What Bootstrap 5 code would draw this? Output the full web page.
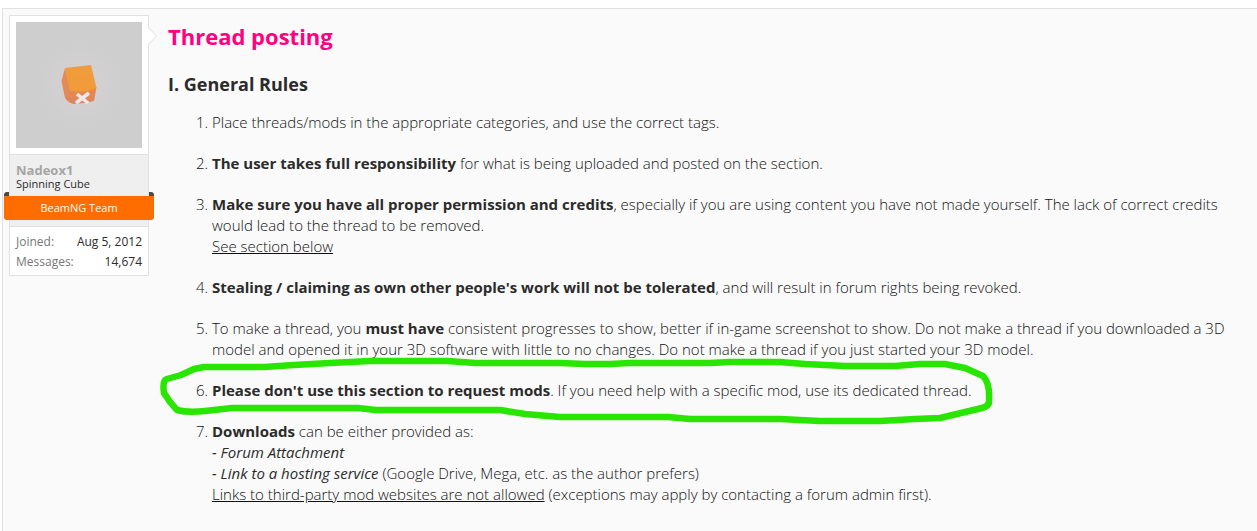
<!DOCTYPE html>
<html lang="en">
<head>
<meta charset="utf-8">
<meta name="viewport" content="width=device-width, initial-scale=1">
<title>Thread posting</title>
<link rel="stylesheet" href="https://cdn.jsdelivr.net/npm/bootstrap@5.3.0/dist/css/bootstrap.min.css">
<style>
body { font-family: "Open Sans", sans-serif; font-size: 15px; line-height: 21px; color: #2b2b2b; background: #fff; }
a, a:hover { color: inherit; }
.post { margin: 8px 0 0 2px; padding: 6px 17px 19px 6px; min-height: calc(100vh - 8px); gap: 19px; background: #fafafa; border: 1px solid #e1e1e1; border-width: 1px 0 0 1px; }
.user-panel { width: 140px; background: #fff; border: 1px solid #e1e1e1; font-size: 12px; line-height: 14px; }
.avatar-box { padding: 6px; }
.avatar-box svg { width: 100%; }
.arrow { top: 11px; left: 100%; width: 9px; height: 18px; overflow: visible; }
.user-text { background: #efefef; border: 1px solid #e1e1e1; border-width: 1px 0; padding: 8px 6px 6px; font-size: 11px; }
.user-name { font-size: 13px; line-height: 14px; color: #a5a5a5; }
.ribbon { margin: 5px -12px 0; height: 24px; line-height: 24px; background: #ff6c00; color: #fff; border-radius: 0 0 3px 3px; }
.ribbon::before, .ribbon::after { content: ""; position: absolute; top: -4px; width: 5px; height: 4px; background: #4a4a4a; }
.ribbon::before { left: 0; border-top-left-radius: 3px; }
.ribbon::after { right: 0; border-top-right-radius: 3px; }
.stats { padding: 5px 6px 3px; line-height: 20px; }
.stats dt { color: #777; }
.title { font-size: 22px; line-height: 30px; color: #ff0080; margin: 6px 0 21px; }
.section-title { font-size: 18px; line-height: 24px; margin-bottom: 16px; }
.rules { padding-left: 44px; font-weight: 300; color: #111; }
.rules b { font-weight: 700; color: #2b2b2b; }
.rules i { font-weight: 400; color: #2b2b2b; }
.rules > li { margin-bottom: 20px; }
.marker-ring { left: -52px; top: -25px; width: 835px; height: 72px; pointer-events: none; }
</style>
</head>
<body>
<article class="post d-flex align-items-start">
  <aside class="user-panel position-relative flex-shrink-0">
    <div class="avatar-box">
      <svg class="d-block" viewBox="0 0 126 126" role="img" aria-label="Nadeox1 avatar">
        <defs>
          <radialGradient id="backdrop"><stop offset="0" stop-color="#d5d1d1"/><stop offset="1" stop-color="#cecece"/></radialGradient>
          <linearGradient id="cubeTop" x2="0" y2="1"><stop offset="0" stop-color="#ee9d3c"/><stop offset="1" stop-color="#f29a39"/></linearGradient>
          <linearGradient id="cubeFront" x2="0" y2="1"><stop offset="0" stop-color="#e88a47"/><stop offset="1" stop-color="#dc8465"/></linearGradient>
          <filter id="soft"><feGaussianBlur stdDeviation=".5"/></filter>
        </defs>
        <path fill="#cecece" d="M0 0h126v126H0z"/>
        <circle cx="64" cy="63" r="48" fill="url(#backdrop)"/>
        <g filter="url(#soft)">
          <path fill="#e18c58" d="M49 46 45.500 59 49 76Q52 81 58 82L55 69Z"/>
          <path fill="url(#cubeFront)" d="M53 68 80.500 65 78 79 68 81 58 82Q53 80 50 77Z"/>
          <path fill="url(#cubeTop)" d="M49 46 75 43 80.500 66Q69 71 54 69Z"/>
          <path fill="none" stroke="#ece9e8" stroke-width="3.500" d="m61 72 11 9M73 71 60 81"/>
        </g>
      </svg>
    </div>
    <svg class="arrow position-absolute" viewBox="0 0 9 18" aria-hidden="true"><path fill="#fff" d="M0 0 9 9 0 18H-1V0Z"/><path fill="none" stroke="#e1e1e1" d="m0 0 8.500 9L0 18"/></svg>
    <div class="user-text">
      <a href="#" class="user-name d-block fw-bold text-decoration-none">Nadeox1</a>
      <div>Spinning Cube</div>
      <div class="ribbon position-relative text-center">BeamNG Team</div>
    </div>
    <dl class="stats mb-0">
      <div class="d-flex justify-content-between"><dt class="fw-normal">Joined:</dt><dd class="mb-0">Aug 5, 2012</dd></div>
      <div class="d-flex justify-content-between"><dt class="fw-normal">Messages:</dt><dd class="mb-0">14,674</dd></div>
    </dl>
  </aside>
  <section class="flex-grow-1">
    <h1 class="title fw-bold">Thread posting</h1>
    <h2 class="section-title fw-bold">I. General Rules</h2>
    <ol class="rules mb-0">
      <li>Place threads/mods in the appropriate categories, and use the correct tags.</li>
      <li><b>The user takes full responsibility</b> for what is being uploaded and posted on the section.</li>
      <li><b>Make sure you have all proper permission and credits</b>, especially if you are using content you have not made yourself. The lack of correct credits would lead to the thread to be removed.<br><a href="#">See section below</a></li>
      <li><b>Stealing / claiming as own other people's work will not be tolerated</b>, and will result in forum rights being revoked.</li>
      <li>To make a thread, you <b>must have</b> consistent progresses to show, better if in-game screenshot to show. Do not make a thread if you downloaded a 3D model and opened it in your 3D software with little to no changes. Do not make a thread if you just started your 3D model.</li>
      <li class="position-relative"><b>Please don't use this section to request mods</b>. If you need help with a specific mod, use its dedicated thread.
        <svg class="marker-ring position-absolute" viewBox="160 355 835 72" aria-hidden="true"><path fill="none" stroke="#29e600" stroke-width="6.500" stroke-linejoin="round" stroke-linecap="round" d="M204 367H264L294 365 330 363 370 361H448L475 363H560L585 364H610L630 363H710L730 362H780L805 364 845 366H895L920 364H945L965 368 983 376Q990 383 989 400Q990 406 982 408L940 418 915 419 880 421H820L780 419H690L668 417H560L525 414 500 410H376L358 408H232L205 411Q188 413 177 410Q170 403 164 393Q162 380 167 379L181 375 194 369 204 367"/></svg>
      </li>
      <li><b>Downloads</b> can be either provided as:<br><i>- Forum Attachment</i><br><i>- Link to a hosting service</i> (Google Drive, Mega, etc. as the author prefers)<br><u>Links to third-party mod websites are not allowed</u> (exceptions may apply by contacting a forum admin first).</li>
    </ol>
  </section>
</article>
<script src="https://cdn.jsdelivr.net/npm/bootstrap@5.3.0/dist/js/bootstrap.bundle.min.js"></script>
</body>
</html>
